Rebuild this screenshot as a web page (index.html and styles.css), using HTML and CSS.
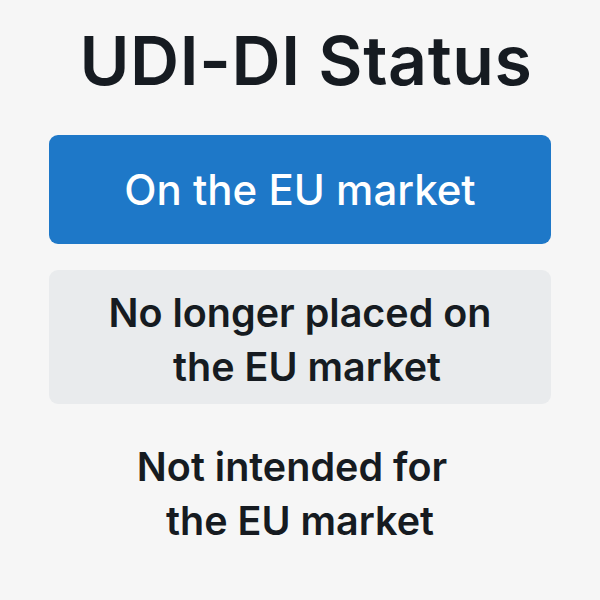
FILE: index.html
```html
<!DOCTYPE html>
<html lang="en">
<head>
    <meta charset="UTF-8">
    <meta name="viewport" content="width=device-width, initial-scale=1.0">
    <title>UDI-DI Status</title>
    <link rel="stylesheet" href="styles.css">
</head>
<body>
    <div id="status-container">
        <h1 id="status-title">UDI-DI Status</h1>
        <div id="options-container">
            <div class="status-option selected">On the EU market</div>
            <div class="status-option muted">No longer placed on<br><span class="shift-right">the EU market</span></div>
            <div class="status-option plain"><span class="shift-left">Not intended for</span><br>the EU market</div>
        </div>
    </div>
</body>
</html>
```

FILE: styles.css
```css
body {
    margin: 0;
    background: #f6f6f6;
    font-family: Inter, "Noto Sans", sans-serif;
    color: #161b21;
}

#status-container {
    width: 502px;
    margin: 0 auto;
    padding-top: 20px;
}

#status-title {
    margin: 0 0 35px;
    padding-left: 12px;
    font-size: 68px;
    font-weight: 600;
    line-height: 80px;
    text-align: center;
    letter-spacing: 0.6px;
}

#options-container {
    display: flex;
    flex-direction: column;
    gap: 26px;
}

.status-option {
    text-align: center;
    font-size: 39.5px;
    font-weight: 600;
    line-height: 54px;
    border-radius: 9px;
}

.status-option.selected {
    height: 109px;
    display: flex;
    align-items: center;
    justify-content: center;
    background: #1e78c8;
    color: #ffffff;
    font-weight: 500;
    font-size: 42px;
}

.status-option.muted {
    padding: 16px 0 10px;
    background: #e9ebed;
}

.status-option.plain {
    padding: 10px 0 0;
}

.shift-right {
    padding-left: 14px;
}

.shift-left {
    padding-right: 16px;
}
```
